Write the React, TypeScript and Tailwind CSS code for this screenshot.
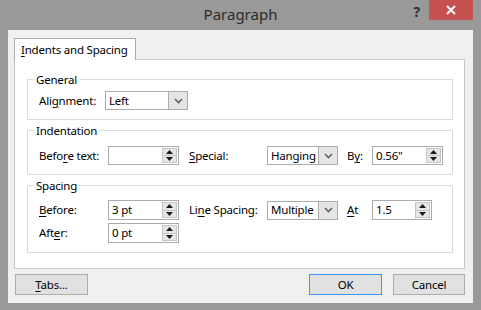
import type { ReactNode } from "react";

const U = ({ children }: { children: ReactNode }) => (
    <span className="underline underline-offset-[2px] decoration-1">{children}</span>
);

const Arrow = ({ down }: { down?: boolean }) => (
    <svg width="7" height="4" viewBox="0 0 7 4" className="block">
        <path d={down ? "M0 0 H7 L3.5 4 Z" : "M0 4 H7 L3.5 0 Z"} fill="#1a1a1a" />
    </svg>
);

const Spin = ({ value, w, h }: { value?: string; w: string; h: string }) => (
    <div className={`flex ${w} ${h} border border-[#acacac] bg-white`}>
        <div className="flex-1 pl-[3px] flex items-center">{value}</div>
        <div className="my-[1px] mr-[1px] flex w-[15px] flex-col border border-[#c6c6c6] bg-[#e6e6e6]">
            <div className="flex flex-1 items-center justify-center border-b border-[#c6c6c6]">
                <Arrow />
            </div>
            <div className="flex flex-1 items-center justify-center">
                <Arrow down />
            </div>
        </div>
    </div>
);

const Combo = ({ value, w }: { value: string; w: string }) => (
    <div className={`flex ${w} h-[19px] border border-[#acacac] bg-white`}>
        <div className="flex-1 overflow-hidden pl-[3px] flex items-center">{value}</div>
        <div className="flex w-[19px] shrink-0 items-center justify-center border-l border-[#acacac] bg-[#e5e5e5]">
            <svg width="9" height="6" viewBox="0 0 9 6">
                <path d="M1 1 L4.5 4.5 L8 1" stroke="#606060" strokeWidth="1.6" fill="none" />
            </svg>
        </div>
    </div>
);

// group box: the border runs through the middle of the legend
const Group = ({ title, className, children }: { title: string; className: string; children: ReactNode }) => (
    <fieldset className={`ml-[12px] w-[426px] border border-[#dcdcdc] ${className}`}>
        <legend className="ml-[6px] px-[2px] pt-[2px] leading-[14px]">{title}</legend>
        {children}
    </fieldset>
);

const Btn = ({ children, w, blue }: { children: ReactNode; w: string; blue?: boolean }) => (
    <div
        className={`flex ${w} h-[21px] items-center justify-center border bg-[#e1e1e1] ${blue ? "border-[#3399ff]" : "border-[#adadad]"}`}
    >
        {children}
    </div>
);

export default function App() {
    return (
        <div className="flex h-[310px] w-[481px] flex-col whitespace-nowrap bg-[#999999] font-['Noto_Sans',sans-serif] text-[11.5px] tracking-[-0.2px] text-black">
            {/* title bar */}
            <div className="grid h-[30px] grid-cols-[1fr_auto_1fr]">
                <div />
                <div className="pt-[4px] text-[15px] leading-[20px] tracking-normal text-[#2b2b2b]">Paragraph</div>
                <div className="flex justify-end">
                    <div className="mr-[9px] mt-[4px] text-[14px] font-bold leading-[16px] text-[#333]">?</div>
                    <div className="mr-[8px] flex h-[20px] w-[44px] items-center justify-center bg-[#c75050]">
                        <svg width="10" height="10" viewBox="0 0 10 10">
                            <path d="M1 1 L9 9 M9 1 L1 9" stroke="#fff" strokeWidth="2" />
                        </svg>
                    </div>
                </div>
            </div>

            {/* dialog body */}
            <div className="mx-[8px] h-[273px] bg-[#f0f0f0] px-[6px] pt-[8px]">
                <div className="relative z-10 -mb-px flex h-[22px] w-[122px] items-center border border-b-0 border-[#acacac] bg-white pl-[6px]">
                    <span>
                        <U>I</U>ndents and Spacing
                    </span>
                </div>
                <div className="h-[210px] w-[451px] border border-[#c9c9c9] bg-white">
                    <Group title="General" className="mt-[11px] pb-[9px]">
                        <div className="mt-[4px] flex items-center pl-[11px]">
                            <span className="w-[66px]">
                                Ali<U>g</U>nment:
                            </span>
                            <Combo value="Left" w="w-[83px]" />
                        </div>
                    </Group>

                    <Group title="Indentation" className="mt-[2px] pb-[9px]">
                        <div className="mt-[8px] flex h-[19px] items-center pl-[11px]">
                            <span className="w-[69px]">
                                Befo<U>r</U>e text:
                            </span>
                            <Spin w="w-[71px]" h="h-[19px]" />
                            <span className="ml-[10px] w-[78px]">
                                <U>S</U>pecial:
                            </span>
                            <Combo value="Hanging" w="w-[71px]" />
                            <span className="ml-[9px] w-[25px]">
                                B<U>y</U>:
                            </span>
                            <Spin value={'0.56"'} w="w-[71px]" h="h-[19px]" />
                        </div>
                    </Group>

                    <Group title="Spacing" className="mt-[2px] pb-[9px]">
                        <div className="mt-[7px] flex h-[20px] items-center pl-[11px]">
                            <span className="w-[69px]">
                                <U>B</U>efore:
                            </span>
                            <Spin value="3 pt" w="w-[71px]" h="h-[20px]" />
                            <span className="ml-[10px] w-[78px]">
                                Li<U>n</U>e Spacing:
                            </span>
                            <Combo value="Multiple" w="w-[71px]" />
                            <span className="ml-[9px] w-[25px]">
                                <U>A</U>t
                            </span>
                            <Spin value="1.5" w="w-[60px]" h="h-[20px]" />
                        </div>
                        <div className="mt-[3px] flex h-[20px] items-center pl-[11px]">
                            <span className="w-[69px]">
                                Aft<U>e</U>r:
                            </span>
                            <Spin value="0 pt" w="w-[71px]" h="h-[20px]" />
                        </div>
                    </Group>
                </div>

                <div className="mt-[5px] flex w-[451px] justify-between">
                    <div className="ml-[1px]">
                        <Btn w="w-[73px]">
                            <span>
                                <U>T</U>abs...
                            </span>
                        </Btn>
                    </div>
                    <div className="flex gap-[11px]">
                        <Btn w="w-[73px]" blue>
                            OK
                        </Btn>
                        <Btn w="w-[72px]">Cancel</Btn>
                    </div>
                </div>
            </div>
        </div>
    );
}
